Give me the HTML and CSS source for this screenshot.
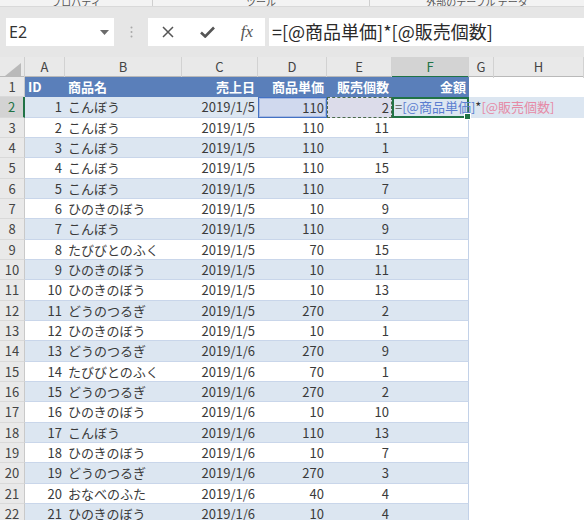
FILE: index.html
```html
<!DOCTYPE html>
<html lang="ja">
<head>
<meta charset="utf-8">
<title>Excel</title>
<link rel="stylesheet" href="styles.css">
</head>
<body>
<div class="ribbon">
  <div class="rb rb1"><span>プロパティ</span></div>
  <div class="rb rb2"><span>ツール</span></div>
  <div class="rb rb3"><span>外部のテーブル データ</span></div>
</div>
<div class="fbar">
  <div class="namebox">
    <span class="nb-text">E2</span>
    <svg class="nb-arrow" width="9" height="5" viewBox="0 0 9 5"><path d="M0 0h9L4.5 5z" fill="#6b6b6b"/></svg>
  </div>
  <div class="grip">
    <svg width="3" height="12" viewBox="0 0 3 12"><circle cx="1.5" cy="1.5" r="1" fill="#a8a8a8"/><circle cx="1.5" cy="6" r="1" fill="#a8a8a8"/><circle cx="1.5" cy="10.5" r="1" fill="#a8a8a8"/></svg>
  </div>
  <div class="btns">
    <svg class="ic" width="12" height="12" viewBox="0 0 12 12"><path d="M1 1L11 11M11 1L1 11" stroke="#555" stroke-width="1.5" fill="none"/></svg>
    <svg class="ic" width="15" height="12" viewBox="0 0 15 12"><path d="M1 6.5L5.2 10.5L14 1.5" stroke="#555" stroke-width="2.6" fill="none"/></svg>
    <span class="fx">fx</span>
  </div>
  <div class="formula">=[@商品単価]*[@販売個数]</div>
</div>
<div class="sheet">
  <div class="row colhdr">
    <div class="corner"><svg width="16" height="13" viewBox="0 0 16 13"><path d="M16 0V13H0z" fill="#b9b9b9"/></svg></div>
    <div class="ch">A</div><div class="ch">B</div><div class="ch">C</div><div class="ch">D</div><div class="ch">E</div><div class="ch sel">F</div><div class="ch">G</div><div class="ch">H</div>
  </div>
  <div class="row hdrrow">
    <div class="rh">1</div>
    <div class="c t hd">ID</div><div class="c t hd">商品名</div><div class="c t hd r">売上日</div><div class="c t hd r">商品単価</div><div class="c t hd r">販売個数</div><div class="c t hd r last">金額</div><div class="c"></div><div class="c"></div>
  </div>
  <div class="row band">
    <div class="rh rsel">2</div>
    <div class="c t r">1</div><div class="c t">こんぼう</div><div class="c t r">2019/1/5</div><div class="c t r refd">110</div><div class="c t r refe">2</div>
    <div class="c t last edit"><span class="eq">=</span><span class="ref1">[@商品単価]</span><span class="op">*</span><span class="ref2">[@販売個数]</span></div>
    <div class="c editbg"></div><div class="c editbg"></div>
  </div>
  <div class="row">
    <div class="rh">3</div>
    <div class="c t r">2</div><div class="c t">こんぼう</div><div class="c t r">2019/1/5</div><div class="c t r">110</div><div class="c t r">11</div><div class="c t last"></div><div class="c"></div><div class="c"></div>
  </div>
  <div class="row band">
    <div class="rh">4</div>
    <div class="c t r">3</div><div class="c t">こんぼう</div><div class="c t r">2019/1/5</div><div class="c t r">110</div><div class="c t r">1</div><div class="c t last"></div><div class="c"></div><div class="c"></div>
  </div>
  <div class="row">
    <div class="rh">5</div>
    <div class="c t r">4</div><div class="c t">こんぼう</div><div class="c t r">2019/1/5</div><div class="c t r">110</div><div class="c t r">15</div><div class="c t last"></div><div class="c"></div><div class="c"></div>
  </div>
  <div class="row band">
    <div class="rh">6</div>
    <div class="c t r">5</div><div class="c t">こんぼう</div><div class="c t r">2019/1/5</div><div class="c t r">110</div><div class="c t r">7</div><div class="c t last"></div><div class="c"></div><div class="c"></div>
  </div>
  <div class="row">
    <div class="rh">7</div>
    <div class="c t r">6</div><div class="c t">ひのきのぼう</div><div class="c t r">2019/1/5</div><div class="c t r">10</div><div class="c t r">9</div><div class="c t last"></div><div class="c"></div><div class="c"></div>
  </div>
  <div class="row band">
    <div class="rh">8</div>
    <div class="c t r">7</div><div class="c t">こんぼう</div><div class="c t r">2019/1/5</div><div class="c t r">110</div><div class="c t r">9</div><div class="c t last"></div><div class="c"></div><div class="c"></div>
  </div>
  <div class="row">
    <div class="rh">9</div>
    <div class="c t r">8</div><div class="c t">たびびとのふく</div><div class="c t r">2019/1/5</div><div class="c t r">70</div><div class="c t r">15</div><div class="c t last"></div><div class="c"></div><div class="c"></div>
  </div>
  <div class="row band">
    <div class="rh">10</div>
    <div class="c t r">9</div><div class="c t">ひのきのぼう</div><div class="c t r">2019/1/5</div><div class="c t r">10</div><div class="c t r">11</div><div class="c t last"></div><div class="c"></div><div class="c"></div>
  </div>
  <div class="row">
    <div class="rh">11</div>
    <div class="c t r">10</div><div class="c t">ひのきのぼう</div><div class="c t r">2019/1/5</div><div class="c t r">10</div><div class="c t r">13</div><div class="c t last"></div><div class="c"></div><div class="c"></div>
  </div>
  <div class="row band">
    <div class="rh">12</div>
    <div class="c t r">11</div><div class="c t">どうのつるぎ</div><div class="c t r">2019/1/5</div><div class="c t r">270</div><div class="c t r">2</div><div class="c t last"></div><div class="c"></div><div class="c"></div>
  </div>
  <div class="row">
    <div class="rh">13</div>
    <div class="c t r">12</div><div class="c t">ひのきのぼう</div><div class="c t r">2019/1/5</div><div class="c t r">10</div><div class="c t r">1</div><div class="c t last"></div><div class="c"></div><div class="c"></div>
  </div>
  <div class="row band">
    <div class="rh">14</div>
    <div class="c t r">13</div><div class="c t">どうのつるぎ</div><div class="c t r">2019/1/6</div><div class="c t r">270</div><div class="c t r">9</div><div class="c t last"></div><div class="c"></div><div class="c"></div>
  </div>
  <div class="row">
    <div class="rh">15</div>
    <div class="c t r">14</div><div class="c t">たびびとのふく</div><div class="c t r">2019/1/6</div><div class="c t r">70</div><div class="c t r">1</div><div class="c t last"></div><div class="c"></div><div class="c"></div>
  </div>
  <div class="row band">
    <div class="rh">16</div>
    <div class="c t r">15</div><div class="c t">どうのつるぎ</div><div class="c t r">2019/1/6</div><div class="c t r">270</div><div class="c t r">2</div><div class="c t last"></div><div class="c"></div><div class="c"></div>
  </div>
  <div class="row">
    <div class="rh">17</div>
    <div class="c t r">16</div><div class="c t">ひのきのぼう</div><div class="c t r">2019/1/6</div><div class="c t r">10</div><div class="c t r">10</div><div class="c t last"></div><div class="c"></div><div class="c"></div>
  </div>
  <div class="row band">
    <div class="rh">18</div>
    <div class="c t r">17</div><div class="c t">こんぼう</div><div class="c t r">2019/1/6</div><div class="c t r">110</div><div class="c t r">13</div><div class="c t last"></div><div class="c"></div><div class="c"></div>
  </div>
  <div class="row">
    <div class="rh">19</div>
    <div class="c t r">18</div><div class="c t">ひのきのぼう</div><div class="c t r">2019/1/6</div><div class="c t r">10</div><div class="c t r">7</div><div class="c t last"></div><div class="c"></div><div class="c"></div>
  </div>
  <div class="row band">
    <div class="rh">20</div>
    <div class="c t r">19</div><div class="c t">どうのつるぎ</div><div class="c t r">2019/1/6</div><div class="c t r">270</div><div class="c t r">3</div><div class="c t last"></div><div class="c"></div><div class="c"></div>
  </div>
  <div class="row">
    <div class="rh">21</div>
    <div class="c t r">20</div><div class="c t">おなべのふた</div><div class="c t r">2019/1/6</div><div class="c t r">40</div><div class="c t r">4</div><div class="c t last"></div><div class="c"></div><div class="c"></div>
  </div>
  <div class="row band">
    <div class="rh">22</div>
    <div class="c t r">21</div><div class="c t">ひのきのぼう</div><div class="c t r">2019/1/6</div><div class="c t r">10</div><div class="c t r">4</div><div class="c t last"></div><div class="c"></div><div class="c"></div>
  </div>
</div>
</body>
</html>
```
FILE: styles.css
```css
* { box-sizing: border-box; }
html, body { margin: 0; padding: 0; }
body {
  width: 584px;
  height: 520px;
  overflow: hidden;
  background: #ffffff;
  font-family: "Noto Sans CJK JP", "Noto Sans", sans-serif;
}

/* ribbon strip (cut off at top) */
.ribbon {
  height: 7px;
  display: flex;
  overflow: hidden;
  background: #f3f3f3;
  border-bottom: 1px solid #d9d9d9;
}
.rb {
  display: flex;
  justify-content: center;
  align-items: flex-end;
  height: 6px;
  border-right: 1px solid #cfcfcf;
  font-size: 10px;
  line-height: 12px;
  color: #555;
  overflow: hidden;
}
.rb span { display: block; margin-bottom: -2px; }
.rb1 { width: 153px; }
.rb2 { width: 217px; }
.rb3 { flex: 1; border-right: none; }

/* formula bar */
.fbar {
  height: 50px;
  display: flex;
  align-items: center;
  padding: 0 0 0 6px;
  background: #e6e6e6;
}
.namebox {
  width: 108px;
  height: 28px;
  background: #fff;
  display: flex;
  align-items: center;
  justify-content: space-between;
  padding: 0 5px 0 3px;
}
.nb-text {
  font-family: "Noto Sans", "Liberation Sans", sans-serif;
  font-size: 16px;
  color: #333;
}
.grip {
  width: 34px;
  display: flex;
  justify-content: center;
  align-items: center;
}
.grip svg { display: block; }
.btns {
  width: 117px;
  height: 28px;
  background: #fff;
  display: flex;
  align-items: center;
  justify-content: space-between;
  padding: 0 12px 0 14px;
}
.ic { display: block; }
.fx {
  font-family: "Liberation Serif", serif;
  font-style: italic;
  font-size: 17px;
  color: #555;
  line-height: 20px;
}
.formula {
  flex: 1;
  margin-left: 4px;
  height: 28px;
  background: #fff;
  padding-left: 3px;
  font-size: 18px;
  line-height: 27px;
  color: #2a2a2a;
  white-space: nowrap;
  overflow: hidden;
}

/* sheet */
.row {
  display: grid;
  grid-template-columns: 25px 40px 117px 76px 69px 65px 77px 25px 1fr;
  height: 20.33px;
}
.colhdr {
  height: 20px;
  background: #e9e9e9;
  border-bottom: 1px solid #b9b9b9;
}
.corner {
  display: flex;
  justify-content: flex-end;
  align-items: flex-end;
  padding: 0 3px 2px 0;
  border-right: 1px solid #cfcfcf;
}
.corner svg { display: block; }
.ch {
  text-align: center;
  font-size: 13px;
  line-height: 19px;
  color: #444;
  border-right: 1px solid #d2d2d2;
}
.ch.sel {
  background: #d3d3d3;
  color: #217346;
  border-bottom: 2px solid #217346;
}

.rh {
  background: #e9e9e9;
  border-right: 1px solid #c9c9c9;
  border-bottom: 1px solid #d9d9d9;
  text-align: center;
  font-size: 13px;
  line-height: 19px;
  color: #444;
}
.rh.rsel {
  background: #d3d3d3;
  color: #217346;
  border-right: 2px solid #217346;
}

.c {
  font-size: 13px;
  line-height: 19px;
  color: #3a3a3a;
  padding: 0 3px;
  white-space: nowrap;
  overflow: hidden;
}
.c.t { border-bottom: 1px solid #c9d6ea; }
.c.r { text-align: right; }
.c.last { border-right: 1px solid #c2d1e8; }
.band .c.t { background: #dce6f1; }

.hdrrow .c.hd {
  background: #5a7fba;
  color: #fff;
  font-weight: bold;
  border-bottom: 1px solid #5a7fba;
}
.hdrrow .c.last { border-right: none; }
.hdrrow .c.hd:first-child { padding-left: 4px; }

/* referenced cells */
.band .c.refd {
  background: #d0d9ee;
  border: 1px solid #4472c4;
  box-shadow: inset 0 0 0 1px rgba(68, 114, 196, 0.3);
  padding-right: 2px;
}
.band .c.refe {
  background: #dcdcea;
  border: 1.5px dashed #4a6a4a;
  padding-right: 2px;
}

/* editing cell */
.band .c.edit {
  position: relative;
  z-index: 1;
  overflow: visible;
  border: 2px solid #217346;
  padding-left: 1px;
  line-height: 16px;
}
.c.edit::after {
  content: "";
  position: absolute;
  right: -4px;
  bottom: -4px;
  width: 5px;
  height: 5px;
  background: #217346;
  border: 1px solid #fff;
}
.c.editbg { background: #dce6f1; }
.eq { color: #555; }
.ref1 { color: #5b7ed0; }
.op { color: #333; }
.ref2 { color: #e68aa6; }
```
